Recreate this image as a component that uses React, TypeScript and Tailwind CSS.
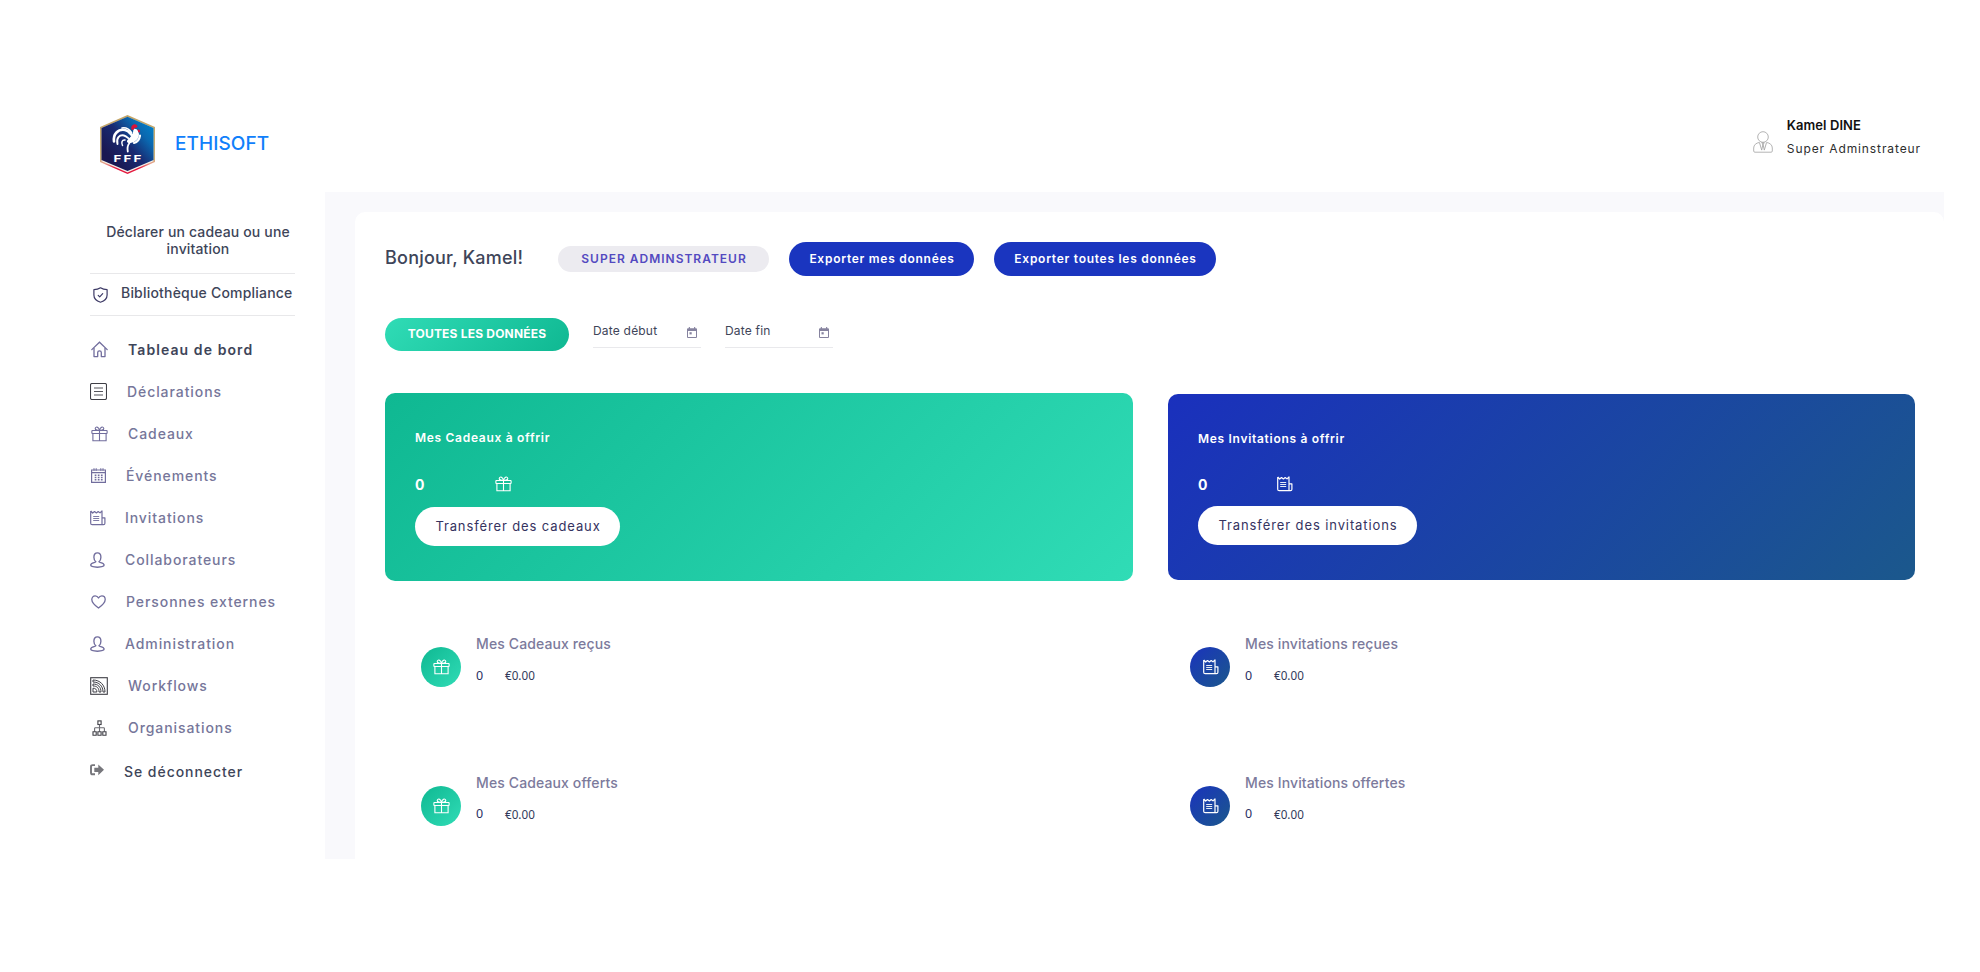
import type { ReactNode } from "react";

type IconProps = { className?: string };

const HomeIcon = ({ className = "" }: IconProps) => (
  <svg className={className} width="17" height="17" viewBox="0 0 17 17" fill="none" stroke="currentColor" strokeWidth="1.3">
    <path d="M.8 8.6 8.5 1.2l7.700 7.400" strokeLinecap="round" />
    <path d="M3 7v8.600h3.700v-4a1.800 1.800 0 0 1 3.600 0v4H14V7" strokeLinejoin="round" />
  </svg>
);

const ListIcon = ({ className = "" }: IconProps) => (
  <svg className={className} width="17" height="17" viewBox="0 0 17 17" fill="none" stroke="#3f3f46">
    <rect x=".5" y=".5" width="16" height="16" rx="1.500" strokeWidth="1.100" />
    <path d="M4 5h9M4 8.500h9M4 12h9" strokeWidth="1.100" stroke="#55555c" />
  </svg>
);

const GiftIcon = ({ className = "" }: IconProps) => (
  <svg className={className} width="17" height="16" viewBox="0 0 17 16" fill="none" stroke="currentColor" strokeWidth="1.100">
    <rect x=".9" y="4.500" width="15.200" height="3" rx=".4" />
    <path d="M1.900 7.500v7.200h13.200V7.500M8.500 4.500v10.200" />
    <path d="M8.500 4.300C7.500 4.500 4 4.300 4.200 2.500 4.500.4 7.600.3 8.500 4.300ZM8.500 4.300c1 .2 4.500 0 4.300-1.800C12.500.4 9.400.3 8.500 4.300Z" />
  </svg>
);

const CalendarIcon = ({ className = "" }: IconProps) => (
  <svg className={className} width="15" height="15" viewBox="0 0 15 15" fill="none" stroke="currentColor">
    <path d="M.6 2h13.800v12.300H.6zM.6 4.600h13.800" strokeWidth="1.200" />
    <path d="M3 .2v2.600M5.200.2v2.600M9.800.2v2.600M12 .2v2.600" strokeWidth="1" />
    <path d="M3.700 7.300h8M3.700 9.500h8M3.700 11.700h8" strokeWidth="1.400" strokeDasharray="1.700 1.400" />
  </svg>
);

const InvitationIcon = ({ className = "" }: IconProps) => (
  <svg className={className} width="16" height="16" viewBox="0 0 16 16" fill="none" stroke="currentColor" strokeWidth="1.200" strokeLinejoin="round">
    <path d="M.7 1v12.200q0 1.500 1.500 1.500h11.300q1.400 0 1.400-1.500V7.800h-2.900M12 14.700V.9L10 2.900 8.200 1.500 6.400 3 4.500 1.500 2.700 3 .7 1" />
    <path d="M3.200 6.500h6M3.200 8.500h6M3.200 10.500h6" strokeWidth=".9" />
  </svg>
);

const PersonIcon = ({ className = "" }: IconProps) => (
  <svg className={className} width="15" height="16" viewBox="0 0 15 16" fill="none" stroke="currentColor" strokeWidth="1.350" strokeLinejoin="round">
    <path d="M5.900 9.700C4.500 8.800 3.900 7 3.900 5.200 3.900 2.500 5.100.8 7.400.8s3.500 1.700 3.500 4.400c0 1.800-.6 3.600-2 4.500 0 1.100 5.200.9 5.200 3.400 0 1.500-2.500 2.100-6.700 2.100S.7 14.600.7 13.100c0-2.500 5.200-2.300 5.200-3.400Z" />
  </svg>
);

const HeartIcon = ({ className = "" }: IconProps) => (
  <svg className={className} width="15" height="14" viewBox="0 0 15 14" fill="none" stroke="currentColor" strokeWidth="1.300" strokeLinejoin="round">
    <path d="M7.500 13.100C3.600 10.200.8 7.700.8 4.500.8 2.300 2.300.8 4.200.8c1.400 0 2.600.8 3.300 2.200C8.200 1.600 9.400.8 10.800.8c1.900 0 3.400 1.500 3.400 3.700 0 3.200-2.800 5.700-6.700 8.600Z" />
  </svg>
);

const WorkflowIcon = ({ className = "" }: IconProps) => (
  <svg className={className} width="18" height="18" viewBox="0 0 18 18" fill="none" stroke="#3f3f46" strokeWidth="1.100">
    <rect x=".7" y=".7" width="16.600" height="16.600" />
    <path d="M3 3c7 0 12 5 12 12h-2C13 9 9 5 3 5ZM3 7c5 0 8 3 8 8H9c0-4-2-6-6-6ZM3 11.200c2.500 0 3.900 1.300 3.900 3.800H3Z" strokeWidth="1" />
  </svg>
);

const OrgIcon = ({ className = "" }: IconProps) => (
  <svg className={className} width="15" height="16" viewBox="0 0 15 16" fill="none" stroke="#3f3f46" strokeWidth="1.100">
    <rect x="5.900" y=".9" width="3.200" height="3.600" />
    <path d="M7.500 4.500v7M2.600 11.500V8.600q0-.8.800-.8h8.200q.8 0 .8.800v2.900" stroke="#6b6b72" />
    <path d="M1 15.200v-3.500h3.200v3.500ZM5.900 15.200v-3.500h3.200v3.500ZM10.800 15.200v-3.500H14v3.500Z" />
  </svg>
);

const LogoutIcon = ({ className = "" }: IconProps) => (
  <svg className={className} width="14" height="12" viewBox="0 0 14 12">
    <path d="M5 1.100H2.600Q1 1.100 1 2.700v6q0 1.600 1.600 1.600H5" fill="none" stroke="#77777c" strokeWidth="1.900" />
    <path d="M4.300 3.700h4V.6L14 5.800l-5.700 5.400V8h-4Z" fill="#77777c" />
  </svg>
);

const ShieldIcon = ({ className = "" }: IconProps) => (
  <svg className={className} width="15" height="16" viewBox="0 0 15 16" fill="none" stroke="#3d3a66" strokeWidth="1.200" strokeLinejoin="round" strokeLinecap="round">
    <path d="M7.500.8C5.500 2.200 3.400 2.700.9 2.700v5.200c0 3.800 3 6.200 6.600 7.300 3.600-1.100 6.600-3.500 6.600-7.300V2.700c-2.500 0-4.600-.5-6.600-1.900Z" />
    <path d="m5.200 8.300 1.500 1.500 3-3.100" />
  </svg>
);

const DateIcon = () => (
  <svg width="10" height="11" viewBox="0 0 10 11" fill="#86839f">
    <path d="M1.800 0h1.100v1.200h4.200V0h1.100v1.200H9a1 1 0 0 1 1 1V10a1 1 0 0 1-1 1H1a1 1 0 0 1-1-1V2.200a1 1 0 0 1 1-1h.8ZM1 4v6h8V4Z" fillRule="evenodd" />
    <rect x="2.500" y="5.200" width="2.200" height="2.200" />
  </svg>
);

const UserIcon = () => (
  <svg width="20" height="22" viewBox="0 0 20 22" fill="none" stroke="#b4b4b4" strokeWidth="1">
    <circle cx="10" cy="6" r="5.300" />
    <path d="M6.500 11.400C3 12 .7 14 .7 17v3q0 1.200 1.200 1.200h16.200q1.200 0 1.200-1.200v-3c0-3-2.300-5-5.800-5.600" />
    <path d="m6.500 11.600 2.200 7.500L10 13l1.300 6.100 2.200-7.500M8.600 11.800h2.800L10 13.200Z" stroke="#a6a6a6" strokeWidth=".9" />
  </svg>
);

const Crest = () => (
  <svg width="56" height="60" viewBox="0 0 56 60">
    <defs>
      <linearGradient id="crest" x1="1" y1="0.100" x2="0.200" y2="0.800">
        <stop offset="0" stopColor="#0083cb" />
        <stop offset=".28" stopColor="#0a68b0" />
        <stop offset=".6" stopColor="#182a72" />
        <stop offset="1" stopColor="#1a1852" />
      </linearGradient>
      <linearGradient id="rim" x1="0" y1="0" x2="0" y2="1">
        <stop offset="0" stopColor="#c2a467" />
        <stop offset=".75" stopColor="#cdb27a" />
        <stop offset=".82" stopColor="#e7a08c" />
        <stop offset=".9" stopColor="#e4173d" />
      </linearGradient>
    </defs>
    <path d="M27.500 0 55 12v35L27.500 59 0 47V12Z" fill="url(#rim)" />
    <path d="M27.500 2 53.300 13v33.300L27.500 57.500 1.700 46.300V13Z" fill="#f4f0ea" />
    <path d="M27.500 1.800 53.500 13v32L27.500 56 1.500 45V13Z" fill="url(#crest)" />
    <g fill="none" stroke="#fff" strokeLinecap="round">
      <path d="M14 26.500C13 19 18 13.800 25 15c4 .8 5.500 4 7.500 5.500" strokeWidth="2.600" />
      <path d="M17.500 29c-1.500-6 2-9.500 6.500-8.500 3 .7 4 3 6 4" strokeWidth="1.900" />
      <path d="M22.500 30.500c-1.500-3-.5-6 2.500-5.500" strokeWidth="1.500" />
      <path d="M22 13c4-.8 7 1 9.500 4.500" strokeWidth="1.600" />
      <path d="M40 20.500c-.5 3.500-2.500 6.500-6 7.500" strokeWidth="2.200" />
      <path d="M29.500 28c-1.700 2-2.500 4-1.700 8.500" strokeWidth="1.800" />
    </g>
    <path d="M33.500 14c1.500-.8 3.500 0 4.500 1.800l1 3.200c0 5-3.500 8-8.500 9-2 .3-4-.5-3.500-2 1-2.500 6-4 6.500-12Z" fill="#fff" />
    <path d="M31.500 14.500c-1-3 1-5.300 3.500-5.300 2 .3 3 1.800 2 3.300-1.500-.2-3 .5-3.500 2.500ZM37.500 14.500c1.500 0 2.800.6 2.600 2s-1.600 1.200-2 .3Z" fill="#d8123a" />
    <text transform="translate(13.500 47.200) scale(1.400 1)" fill="#fff" fontFamily="Inter, sans-serif" fontSize="9.600" fontWeight="700" letterSpacing="1.500">FFF</text>
  </svg>
);

const nav: { label: string; icon: ReactNode; gap: string }[] = [
  { label: "Tableau de bord", icon: <HomeIcon className="ml-[0.500px]" />, gap: "w-[38px]" },
  { label: "Déclarations", icon: <ListIcon />, gap: "w-[37px]" },
  { label: "Cadeaux", icon: <GiftIcon className="ml-[0.500px]" />, gap: "w-[38px]" },
  { label: "Événements", icon: <CalendarIcon className="ml-[0.500px]" />, gap: "w-[36px]" },
  { label: "Invitations", icon: <InvitationIcon />, gap: "w-[35px]" },
  { label: "Collaborateurs", icon: <PersonIcon />, gap: "w-[35px]" },
  { label: "Personnes externes", icon: <HeartIcon className="ml-[0.500px]" />, gap: "w-[36px]" },
  { label: "Administration", icon: <PersonIcon />, gap: "w-[35px]" },
  { label: "Workflows", icon: <WorkflowIcon />, gap: "w-[38px]" },
  { label: "Organisations", icon: <OrgIcon className="ml-[1.500px]" />, gap: "w-[38px]" },
];

const Sidebar = () => (
  <aside className="w-[325px] shrink-0 pl-[90px] pt-[31px] text-[14px] font-medium text-[#3e4559]">
    <div className="w-[216px] text-center leading-[17px] tracking-[0.150px]">Déclarer un cadeau ou une invitation</div>
    <div className="mt-[16px] flex h-[43px] w-[205px] items-center border-y border-[#e8e8ea]">
      <ShieldIcon className="ml-[3px] mt-[1px]" />
      <span className="-mt-[5px] ml-[13px] whitespace-nowrap tracking-[0.200px]">Bibliothèque Compliance</span>
    </div>
    <nav className="mt-[12px]">
      {nav.map((n, i) => (
        <div key={n.label} className="flex h-[42px] items-center">
          <span className={`${n.gap} flex shrink-0 items-center pt-[1px] text-[#716d9d]`}>{n.icon}</span>
          <span className={i === 0 ? "font-semibold tracking-[1.080px]" : "font-[450] tracking-[0.920px] text-[#76769a]"}>{n.label}</span>
        </div>
      ))}
      <div className="mt-[2px] flex h-[42px] items-center">
        <LogoutIcon className="-mt-[3px]" />
        <span className="ml-[20px] font-[450] tracking-[0.950px]">Se déconnecter</span>
      </div>
    </nav>
  </aside>
);

const DateField = ({ label }: { label: string }) => (
  <div className="flex h-[30px] w-[108px] items-center justify-between border-b border-[#e9e9ec] pr-[4px] text-[12px] text-[#3e4559]">
    <span className="-mt-[3px] tracking-[0.200px]">{label}</span>
    <DateIcon />
  </div>
);

const Stat = ({ title, blue }: { title: string; blue?: boolean }) => (
  <div className="flex h-[80px]">
    <span className={`mt-[14px] flex size-[40px] items-center justify-center rounded-full bg-linear-135/srgb text-white ${blue ? "from-[#1a33bd] to-[#1b588c]" : "from-[#0fb892] to-[#30dcb6]"}`}>
      {blue ? <InvitationIcon className="ml-[1px]" /> : <GiftIcon />}
    </span>
    <div className="ml-[15px]">
      <div className="h-[22px] text-[14px] font-medium leading-[22px] tracking-[0.120px] text-[#7c7a9c]">{title}</div>
      <div className="mt-[10px] flex h-[22px] items-center font-['Noto_Sans',sans-serif] text-[#323a5a]">
        <span className="w-[29px] text-[12.500px] text-[#2b2f63]">0</span>
        <span className="text-[11.700px]">€0.00</span>
      </div>
    </div>
  </div>
);

export default function App() {
  return (
    <div className="h-[972px] w-[1980px] overflow-hidden bg-white font-['Inter',sans-serif]">
      <header className="flex h-[192px] justify-between pl-[100px] pr-[59px] pt-[97px]">
        <div className="flex h-[95px] items-center">
          <Crest />
          <span className="ml-[19px] text-[19px] font-[450] tracking-[0.080px] text-[#1080fb]">ETHISOFT</span>
        </div>
        <div className="flex pt-[17px]">
          <div className="pt-[17px]"><UserIcon /></div>
          <div className="ml-[14px] leading-[23px]">
            <div className="text-[13px] font-semibold tracking-[0.080px] text-[#111]">Kamel DINE</div>
            <div className="text-[12px] tracking-[0.900px] text-[#2d2d2d]">Super Adminstrateur</div>
          </div>
        </div>
      </header>
      <div className="flex h-[667px]">
        <Sidebar />
        <main className="w-[1619px] bg-[#f9f9fc] pl-[30px] pt-[20px]">
          <section className="h-full rounded-t-[10px] bg-white pl-[30px] pt-[30px]">
            <div className="flex h-[34px] items-center whitespace-nowrap font-semibold">
              <h1 className="-mt-[4px] w-[173px] text-[18px] font-medium tracking-[0.220px] text-[#3e4559]">Bonjour, Kamel!</h1>
              <span className="flex h-[26px] w-[211px] items-center justify-center rounded-full bg-[#ecebf0] pl-[1px] text-[12px] tracking-[1px] text-[#5349c0]">SUPER ADMINSTRATEUR</span>
              <button className="ml-[20px] h-[34px] w-[185px] rounded-full bg-[#1a35bf] pl-[1px] text-[12px] tracking-[0.730px] text-white">Exporter mes données</button>
              <button className="ml-[20px] h-[34px] w-[222px] rounded-full bg-[#1a35bf] pl-[1px] text-[12px] tracking-[0.730px] text-white">Exporter toutes les données</button>
            </div>
            <div className="mt-[42px] flex h-[33px]">
              <button className="h-[33px] w-[184px] rounded-full bg-linear-135/srgb from-[#30dcb6] to-[#0fb892] pb-[1px] text-[12px] font-bold tracking-[0.200px] text-white">TOUTES LES DONNÉES</button>
              <div className="ml-[24px] flex gap-[24px]">
                <DateField label="Date début" />
                <DateField label="Date fin" />
              </div>
            </div>
            <div className="mt-[42px] flex h-[188px] items-center gap-[35px]">
              <div className="h-[188px] w-[748px] rounded-[10px] bg-linear-135/srgb from-[#0fb892] to-[#30dcb6] pl-[30px] pt-[34px] text-white">
                <div className="h-[22px] text-[12px] font-semibold leading-[22px] tracking-[0.700px]">Mes Cadeaux à offrir</div>
                <div className="mt-[24px] flex h-[22px] items-center">
                  <span className="w-[79.500px] text-[14px] font-bold">0</span>
                  <GiftIcon className="mb-[1px]" />
                </div>
                <button className="mt-[12px] block h-[39px] w-[205px] rounded-full bg-white pl-[1px] text-[13px] tracking-[0.880px] text-[#35335f]">Transférer des cadeaux</button>
              </div>
              <div className="h-[186px] w-[747px] rounded-[10px] bg-linear-135/srgb from-[#1a30bd] to-[#1b588c] pl-[30px] pt-[34px] text-white">
                <div className="h-[22px] text-[12px] font-semibold leading-[22px] tracking-[0.700px]">Mes Invitations à offrir</div>
                <div className="mt-[23px] flex h-[22px] items-center">
                  <span className="w-[79px] text-[14px] font-bold">0</span>
                  <InvitationIcon className="mb-[1px]" />
                </div>
                <button className="mt-[11px] block h-[39px] w-[219px] rounded-full bg-white pl-[1px] text-[13px] tracking-[0.900px] text-[#35335f]">Transférer des invitations</button>
              </div>
            </div>
            <div className="ml-[36px] mt-[52px] grid grid-cols-[769px_1fr] gap-y-[58.500px]">
              <Stat title="Mes Cadeaux reçus" />
              <Stat title="Mes invitations reçues" blue />
              <Stat title="Mes Cadeaux offerts" />
              <Stat title="Mes Invitations offertes" blue />
            </div>
          </section>
        </main>
      </div>
    </div>
  );
}
